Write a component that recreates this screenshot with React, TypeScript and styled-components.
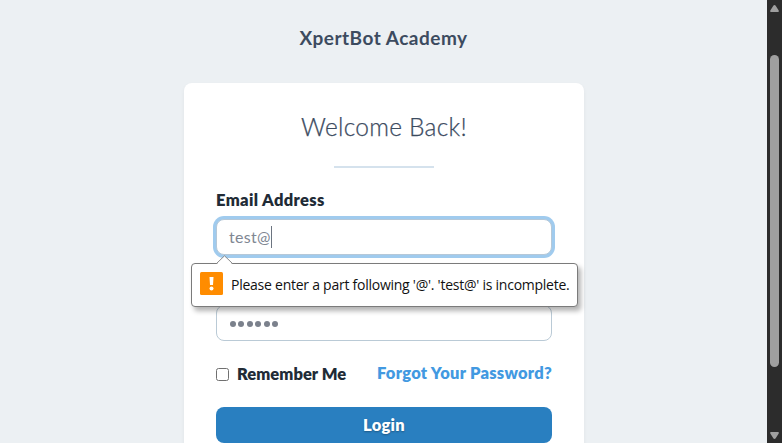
import React from "react";
import styled, { createGlobalStyle } from "styled-components";

const GlobalStyle = createGlobalStyle`
  *, *::before, *::after { box-sizing: border-box; }
  html, body { margin: 0; background: #ecf0f3; overflow: hidden; }
  body { font-family: Lato, "Open Sans", sans-serif; font-size: 16px; color: #212b36; }
`;

const Window = styled.div`
  display: flex;
  width: 782px;
  height: 443px;
  overflow: hidden;
`;

const Page = styled.main`
  width: 767px;
  height: 443px;
  display: flex;
  flex-direction: column;
  align-items: center;
  overflow: hidden;
  background: #ecf0f3;
`;

const Brand = styled.h1`
  margin: 26px 0 33px;
  height: 24px;
  line-height: 24px;
  font-size: 19px;
  font-weight: 700;
  letter-spacing: 0.5px;
  color: #3c4b5f;
  white-space: nowrap;
`;

const Card = styled.form`
  flex: none;
  width: 400px;
  height: 460px;
  margin-left: 1px;
  padding: 28px 32px 32px;
  background: #fff;
  border-radius: 8px;
  box-shadow: 0 2px 4px rgba(0, 0, 0, 0.05);
  display: flex;
  flex-direction: column;
`;

const Title = styled.h2`
  margin: 0;
  height: 32px;
  line-height: 32px;
  text-align: center;
  font-size: 24.5px;
  font-weight: 300;
  letter-spacing: 0.25px;
  color: #3c4b5f;
  -webkit-text-stroke: 0.25px #3c4b5f;
`;

const Divider = styled.hr`
  width: 100px;
  height: 2px;
  margin: 23px auto 22px;
  border: 0;
  background: #d5e2ed;
`;

const Label = styled.label<{ $tracking?: string }>`
  height: 22px;
  line-height: 21px;
  font-size: 16.5px;
  font-weight: 800;
  letter-spacing: ${(p) => p.$tracking ?? "0.36px"};
  white-space: nowrap;
`;

const Field = styled.div<{ $focused?: boolean }>`
  position: relative;
  display: flex;
  align-items: center;
  height: 36px;
  padding: 0 11px;
  border: 1px solid ${(p) => (p.$focused ? "#b5c8d8" : "#bacad6")};
  border-radius: 8px;
  background: #fff;
  box-shadow: ${(p) => (p.$focused ? "0 0 0 3px #a0cbee" : "none")};
  color: #7f8793;
`;

const EmailField = styled(Field)`
  margin: 7px 0 50px;
`;

const Value = styled.span`
  line-height: 22px;
  padding-left: 1px;
  letter-spacing: 0.3px;
`;

const Caret = styled.span`
  width: 1px;
  height: 22px;
  background: #6c7480;
`;

const Dots = styled.span`
  display: flex;
  gap: 2.5px;
  padding-left: 1.5px;
`;

const Dot = styled.span`
  width: 6px;
  height: 6px;
  margin-top: 1px;
  border-radius: 50%;
  background: #7b818c;
`;

const Bubble = styled.div`
  position: absolute;
  z-index: 2;
  left: -26px;
  top: 43px;
  width: 387px;
  height: 44px;
  display: flex;
  align-items: center;
  padding: 0 8px;
  gap: 8px;
  border: 1px solid #7b7b7b;
  border-radius: 4px;
  background: #fff;
  box-shadow: 3px 4px 5px rgba(0, 0, 0, 0.3);
  color: #111;
  font-family: "Open Sans", "Noto Sans", sans-serif;
  font-size: 14px;
  white-space: nowrap;
`;

const Pointer = styled.svg`
  position: absolute;
  left: 24px;
  top: -9px;
`;

const Warning = styled.svg`
  flex: none;
  margin-top: -3px;
`;

const Message = styled.span`
  letter-spacing: -0.25px;
  margin-top: -1px;
`;

const Options = styled.div`
  display: flex;
  align-items: center;
  justify-content: space-between;
  height: 22px;
  margin: 22px 0;
`;

const Remember = styled(Label)`
  display: flex;
  align-items: center;
`;

const Checkbox = styled.input`
  appearance: none;
  width: 13px;
  height: 13px;
  margin: 1px 8px 0 0;
  border: 1px solid #707070;
  border-radius: 2.5px;
  background: #fff;
`;

const Forgot = styled.a`
  height: 22px;
  line-height: 21px;
  color: #4299e1;
  font-size: 16.5px;
  font-weight: 800;
  letter-spacing: 0.25px;
  white-space: nowrap;
  text-decoration: none;
`;

const Submit = styled.button`
  height: 36px;
  padding: 0;
  border: 0;
  border-radius: 8px;
  background: #297fc0;
  color: #fff;
  font: 800 16.5px/35px Lato, sans-serif;
  letter-spacing: 0.3px;
  text-shadow: 0 1px 2px rgba(0, 0, 0, 0.3);
`;

const Scrollbar = styled.div`
  width: 15px;
  height: 443px;
  display: flex;
  flex-direction: column;
  align-items: center;
  background: #2c2c2c;
`;

const Thumb = styled.div`
  width: 9px;
  height: 312px;
  margin: 43px 0 65px;
  border-radius: 5px;
  background: #9f9f9f;
`;

const Arrow = styled.svg<{ $down?: boolean }>`
  display: block;
  flex: none;
  margin-top: ${(p) => (p.$down ? "0" : "5px")};
  transform: ${(p) => (p.$down ? "rotate(180deg)" : "none")};
`;

function ScrollArrow({ down }: { down?: boolean }) {
  return (
    <Arrow $down={down} width="9" height="7" viewBox="0 0 9 7">
      <path d="M4.5 0 Q5.2 0 5.7 .8L8.7 5.5Q9.3 7 8 7H1Q-.3 7 .3 5.5L3.3 .8Q3.8 0 4.5 0Z" fill="#9f9f9f" />
    </Arrow>
  );
}

export default function App() {
  return (
    <>
      <GlobalStyle />
      <Window>
        <Page>
          <Brand>XpertBot Academy</Brand>
          <Card>
            <Title>Welcome Back!</Title>
            <Divider />
            <Label>Email Address</Label>
            <EmailField $focused>
              <Value>test@</Value>
              <Caret />
              <Bubble role="alert">
                <Pointer width="17" height="10" viewBox="0 0 17 10">
                  <path d="M0 10 8.5 1 17 10Z" fill="#fff" />
                  <path d="M.5 8.5 8.5 .8 16.5 8.5" fill="none" stroke="#8a8a8a" />
                </Pointer>
                <Warning width="23" height="23" viewBox="0 0 23 23">
                  <rect width="23" height="23" rx="1.5" fill="#ff8c00" />
                  <path d="M9.5 5h4l-.5 8h-3z" fill="#fff" />
                  <circle cx="11.5" cy="16.5" r="2" fill="#fff" />
                </Warning>
                <Message>Please enter a part following '@'. 'test@' is incomplete.</Message>
              </Bubble>
            </EmailField>
            <Field>
              <Dots>
                {Array.from({ length: 6 }, (_, i) => (
                  <Dot key={i} />
                ))}
              </Dots>
            </Field>
            <Options>
              <Remember $tracking="0.05px">
                <Checkbox type="checkbox" />
                Remember Me
              </Remember>
              <Forgot>Forgot Your Password?</Forgot>
            </Options>
            <Submit type="button">Login</Submit>
          </Card>
        </Page>
        <Scrollbar>
          <ScrollArrow />
          <Thumb />
          <ScrollArrow down />
        </Scrollbar>
      </Window>
    </>
  );
}
